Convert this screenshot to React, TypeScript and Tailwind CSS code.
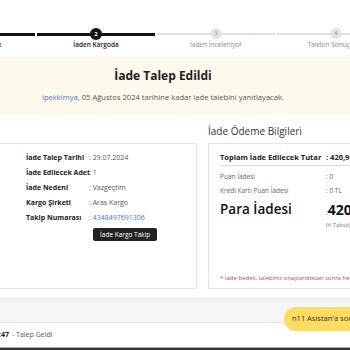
import React from "react";

const font = { fontFamily: '"Open Sans", "Noto Sans", sans-serif' };

const steps = [
  { no: 1, label: "Talebin Alınacak", done: true },
  { no: 2, label: "İaden Kargoda", done: true },
  { no: 3, label: "İaden İnceleniyor", done: false },
  { no: 4, label: "Talebin Sonuçlandı", done: false },
];

const leftRows = [
  { label: "İade Talep Tarihi", value: "29.07.2024" },
  { label: "İade Edilecek Adet", value: "1" },
  { label: "İade Nedeni", value: "Vazgeçtim" },
  { label: "Kargo Şirketi", value: "Aras Kargo" },
  { label: "Takip Numarası", value: "4348497691306", link: true },
];

const Step = ({ no, label, done }: (typeof steps)[number]) => (
  <div className="relative w-[118px] shrink-0 h-[57px]">
    <div className={`absolute left-0 right-0 ${done ? "top-[33px] h-[3px] bg-[#111]" : "top-[33px] h-[2px] bg-[#ddd]"}`} />
    <div
      className={`absolute left-1/2 -translate-x-1/2 flex items-center justify-center rounded-full ${
        done
          ? "top-[28px] w-[12px] h-[12px] bg-[#111] text-white font-bold"
          : "top-[28px] w-[11px] h-[11px] bg-[#e3e3e3] text-[#888]"
      } text-[6px]`}
    >
      {no}
    </div>
    <div
      className={`absolute left-[-20px] right-[-20px] top-[40px] text-center text-[6.5px] whitespace-nowrap ${
        done ? "text-[#222] font-semibold" : "text-[#888]"
      }`}
    >
      {label}
    </div>
  </div>
);

export default function App() {
  return (
    <div className="w-[350px] h-[350px] overflow-hidden bg-white text-[#333] flex flex-col" style={font}>
      {/* progress */}
      <div className="flex gap-[2px] ml-[-83px] h-[57px] shrink-0">
        {steps.map((s) => (
          <Step key={s.no} {...s} />
        ))}
      </div>

      {/* info banner */}
      <div className="h-[58px] shrink-0 bg-[#fdf9ec] flex flex-col items-center pt-[10px] pr-[24px]">
        <div className="text-[12px] font-bold text-[#222] leading-[18px]">İade Talep Edildi</div>
        <div className="text-[7.6px] text-[#555] mt-[7px] whitespace-nowrap">
          <span className="text-[#4a76d0]">ipekkimya</span>, 05 Ağustos 2024 tarihine kadar iade talebini yanıtlayacak.
        </div>
      </div>

      {/* cards */}
      <div className="flex gap-[11px] pt-[9px] h-[183px] shrink-0 overflow-hidden">
        <div className="w-[197px] shrink-0 flex flex-col">
          <div className="h-[19px]" />
          <div className="flex-1 min-h-0 border border-l-0 border-[#e6e6e6] pl-[26px] pt-[7px] mb-[9px]">
            {leftRows.map((r) => (
              <div key={r.label} className="flex h-[15px] items-center text-[7px]">
                <div className="w-[63px] shrink-0 font-bold text-[#222] whitespace-nowrap">{r.label}</div>
                <div className={r.link ? "text-[#4a76d0]" : "text-[#555]"}>: {r.value}</div>
              </div>
            ))}
            <div className="flex pl-[67px] mt-[2px]">
              <button className="bg-[#222] text-white text-[6.5px] leading-[13px] h-[13px] px-[7px] rounded-[2px]">İade Kargo Takip</button>
            </div>
          </div>
        </div>

        <div className="flex-1 flex flex-col min-w-0">
          <div className="h-[19px] text-[10px] leading-[14px] text-[#333] whitespace-nowrap">İade Ödeme Bilgileri</div>
          <div className="flex-1 min-h-0 border border-r-0 border-[#e6e6e6] mb-[9px] pl-[11px] pt-[7px] flex flex-col overflow-hidden">
            <div className="flex items-center text-[7.5px] border-b border-[#ddd] mb-[4px] h-[15px]">
              <div className="w-[106px] shrink-0 font-bold text-[#222] whitespace-nowrap">Toplam İade Edilecek Tutar</div>
              <div className="font-bold text-[#222] whitespace-nowrap">: 420,91 TL</div>
            </div>
            <div className="flex h-[14px] items-center text-[6.5px] text-[#666]">
              <div className="w-[106px] shrink-0">Puan İadesi</div>
              <div>: 0</div>
            </div>
            <div className="flex h-[14px] items-center text-[6.5px] text-[#666]">
              <div className="w-[106px] shrink-0 whitespace-nowrap">Kredi Kartı Puan İadesi</div>
              <div className="whitespace-nowrap">: 0 TL</div>
            </div>
            <div className="flex mt-[2px]">
              <div className="w-[106px] shrink-0 text-[13.5px] font-semibold text-[#111] leading-[18px] whitespace-nowrap">Para İadesi</div>
              <div className="flex flex-col">
                <div className="whitespace-nowrap leading-[18px]">
                  <span className="text-[7px] text-[#555]">:</span>
                  <span className="text-[14px] font-bold text-[#111]">420,91 TL</span>
                </div>
                <div className="text-[6px] text-[#777] leading-[7px] whitespace-nowrap">(6 Taksit)</div>
              </div>
            </div>
            <div className="mt-auto mb-[5px] text-[6px] text-[#d23a55] whitespace-nowrap">
              * İade bedeli, talebiniz onaylandıktan sonra hesabınıza aktarılacaktır.
            </div>
          </div>
        </div>
      </div>

      {/* bottom */}
      <div className="h-[24px] shrink-0 bg-[#f5f5f5] border-t border-[#e8e8e8] relative">
        <div className="absolute right-[-20px] top-[8px] h-[24px] w-[86px] rounded-full bg-[#fddc62] text-[7.5px] text-[#333] flex items-center pl-[8px] whitespace-nowrap z-10">
          n11 Asistan'a sor
        </div>
      </div>
      <div className="h-[25px] shrink-0 bg-white border-t border-[#e6e6e6] flex items-center text-[7px] text-[#555] overflow-hidden">
        <span className="font-bold text-[#222] ml-[-9px]">14:47</span>
        <span className="ml-[3px]">- Talep Geldi</span>
      </div>
      <div className="flex-1 bg-[#333] border-t border-[#aaa]" />
    </div>
  );
}
